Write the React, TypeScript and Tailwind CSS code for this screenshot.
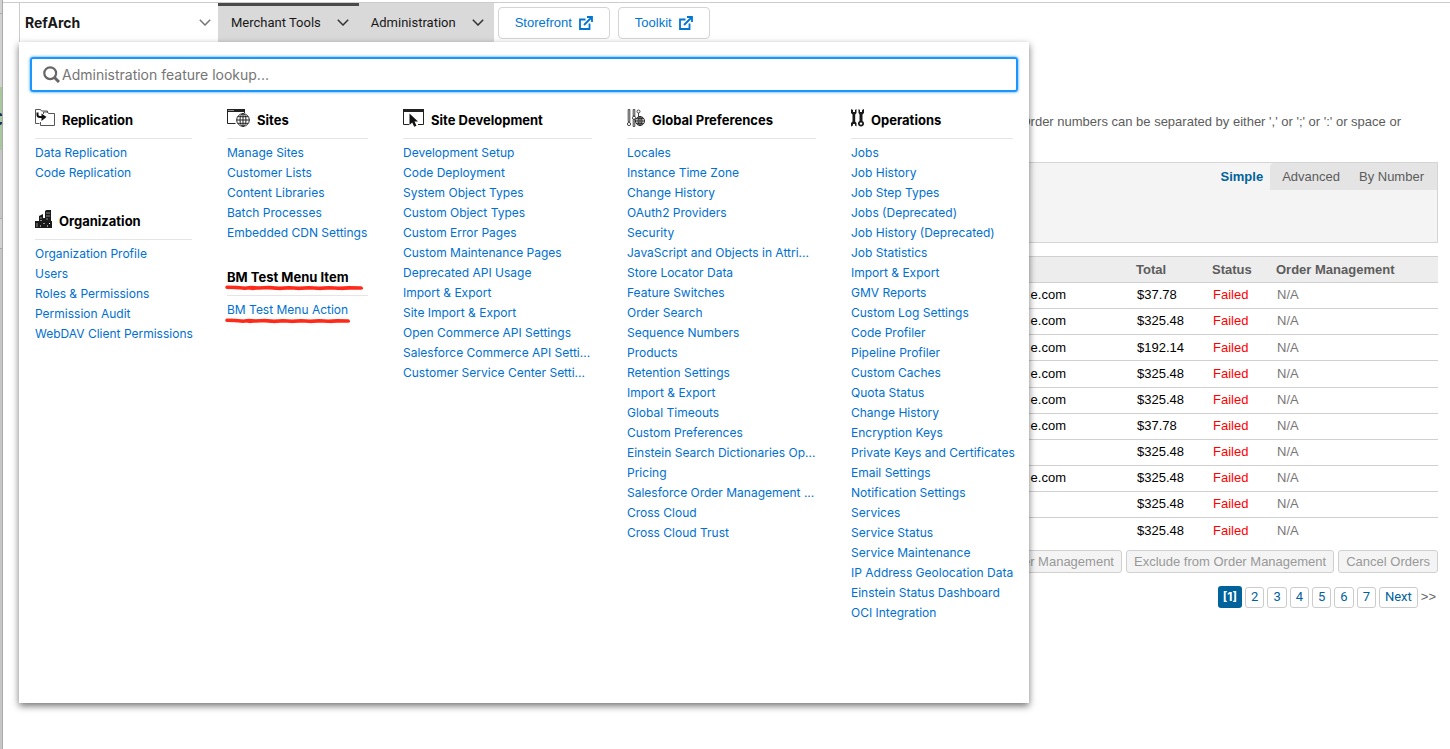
import React, { FC, ReactNode } from "react";

interface MenuSection {
  title: string;
  icon?: ReactNode;
  links: string[];
  marked?: boolean;
}

interface MenuColumn {
  width: string;
  sections: MenuSection[];
}

const ReplicationIcon = () => (
  <svg className="h-[18px] w-5" viewBox="0 0 20 18" fill="none" stroke="#555">
    <path d="M.5 14.500V.5h5l1 1.500h6v2" />
    <path d="M.5 14.500h4" />
    <path d="M5.500 13V16.500h14v-12h-6l-1-1.500h-4v2" />
    <path d="M2.500 3.500v2.500q0 2 2.500 2h2" stroke="#111" strokeWidth="2" />
    <path d="M6.500 4.500l5 3.500-5 4z" fill="#111" stroke="none" />
  </svg>
);

const OrganizationIcon = () => (
  <svg className="h-[18px] w-[17px]" viewBox="0 0 17 18">
    <path d="M0 18v-7h4V6l4-2v4h2V1l1.500-1H16v11h1v7z" fill="#1a1a1a" />
    <path
      d="M1.500 14h1M1.500 16h1M5.500 8h1M5.500 10.500h1M11.500 3h1M13.500 3h1M11.500 6h1M13.500 6h1M11.500 9h1M8.500 13.500h1M14 13.500h1M5 16h1M12 16h1"
      stroke="#fff"
    />
  </svg>
);

const SitesIcon = () => (
  <svg className="h-[18px] w-[23px]" viewBox="0 0 23 18" fill="none" stroke="#222">
    <path d="M.5 1v13.500h8M17.500 1v3" />
    <path d="M0 1.500h18" strokeWidth="3" />
    <path d="M1.500 1.500h1M3.500 1.500h1M5.500 1.500h1" stroke="#fff" />
    <circle cx="16" cy="11" r="6.300" fill="#fff" />
    <ellipse cx="16" cy="11" rx="3" ry="6.300" />
    <path d="M16 4.500v13M9.500 11h13M10.800 7.700h10.400M10.800 14.300h10.400" />
  </svg>
);

const SiteDevelopmentIcon = () => (
  <svg className="h-[18px] w-[21px]" viewBox="0 0 21 18" fill="none" stroke="#222">
    <path d="M6 15.500H.5V1M15 15.500h5.500V1" />
    <path d="M0 1.500h21" strokeWidth="3" />
    <path d="M6.500 4.500v11.500l2.700-2.500 2 4.300 2.300-1-2-4.300h3.500z" fill="#111" stroke="none" />
  </svg>
);

const GlobalPreferencesIcon = () => (
  <svg className="h-[18px] w-[18px]" viewBox="0 0 18 18" fill="none" stroke="#444">
    <path d="M1.200 .5h1.600v12H1.200zM6.200 .5h1.600v6.500H6.200zM11.500 4v4" />
    <circle cx="2" cy="15" r="1.600" />
    <circle cx="7" cy="8.800" r="1.600" />
    <path d="M6.200 10.500h1.600v7H6.200z" />
    <circle cx="11.500" cy="2.500" r="1.500" />
    <circle cx="13" cy="12" r="4.500" fill="#fff" stroke="#222" />
    <ellipse cx="13" cy="12" rx="2" ry="4.500" stroke="#222" />
    <path d="M13 7.500v9M8.500 12h9M9.500 9.700h7M9.500 14.300h7" stroke="#222" />
  </svg>
);

const OperationsIcon = () => (
  <svg className="h-[18px] w-[13px]" viewBox="0 0 13 18" fill="#1a1a1a">
    <path d="M0 0l2 1v2h2V1l1.500-1v4L4.200 5.500v7L5.500 14v3.500L4 16.500V15H2v1.500L0 17.500V14l1.500-1.500v-7L0 4z" />
    <path d="M7.500 0L9 1v2h2V1l2-1v4l-1.500 1.500v6.500a3 3 0 1 1-3 0V5.500L7.500 4z" />
    <circle cx="10" cy="14.600" r="1.200" fill="#fff" />
  </svg>
);

const SearchIcon = () => (
  <svg className="h-[17px] w-[17px]" viewBox="0 0 17 17" fill="none" stroke="#666" strokeWidth="2.200">
    <circle cx="7.200" cy="7.200" r="5.900" />
    <path d="M11.500 11.500l4.500 4.500" strokeWidth="3" />
  </svg>
);

const Chevron: FC<{ color?: string }> = ({ color = "#333" }) => (
  <svg className="h-[7px] w-3" viewBox="0 0 12 7" fill="none" stroke={color} strokeWidth="1.500">
    <path d="M.8 .8L6 6 11.200 .8" />
  </svg>
);

const ExternalIcon = () => (
  <svg className="h-[14px] w-[14px]" viewBox="0 0 14 14" fill="none" stroke="#0176d3" strokeWidth="1.800">
    <path d="M6.500 3.500H1V13h9.500V7.500" />
    <path d="M5 9l7.500-7.500M8 1h5v5" />
  </svg>
);

const Scribble: FC<{ className: string }> = ({ className }) => (
  <svg
    className={`absolute top-full -left-0.5 h-[6px] ${className}`}
    viewBox="0 0 138 6"
    preserveAspectRatio="none"
    fill="none"
    stroke="#ff2a1a"
    strokeLinecap="round"
  >
    <path
      d="M2 2.200L12 2.500 20 3.200 26 2.500 34 3 44 2.500 54 3.200 64 2.700 74 3.200 84 2.700 94 3.200 104 2.700 114 3.200 124 2.700 136 3"
      strokeWidth="3.500"
    />
    <path d="M3 2l9 1.500 7-1 9 2 8-2 10 1 9 1 11-2 8 2 12-2 9 2 12-2 10 2 12-2 9 1" strokeWidth="1.500" />
  </svg>
);

const columns: MenuColumn[] = [
  {
    width: "w-[157px]",
    sections: [
      {
        title: "Replication",
        icon: <ReplicationIcon />,
        links: ["Data Replication", "Code Replication"],
      },
      {
        title: "Organization",
        icon: <OrganizationIcon />,
        links: [
          "Organization Profile",
          "Users",
          "Roles & Permissions",
          "Permission Audit",
          "WebDAV Client Permissions",
        ],
      },
    ],
  },
  {
    width: "w-[141px]",
    sections: [
      {
        title: "Sites",
        icon: <SitesIcon />,
        links: [
          "Manage Sites",
          "Customer Lists",
          "Content Libraries",
          "Batch Processes",
          "Embedded CDN Settings",
        ],
      },
      {
        title: "BM Test Menu Item",
        links: ["BM Test Menu Action"],
        marked: true,
      },
    ],
  },
  {
    width: "w-[189px]",
    sections: [
      {
        title: "Site Development",
        icon: <SiteDevelopmentIcon />,
        links: [
          "Development Setup",
          "Code Deployment",
          "System Object Types",
          "Custom Object Types",
          "Custom Error Pages",
          "Custom Maintenance Pages",
          "Deprecated API Usage",
          "Import & Export",
          "Site Import & Export",
          "Open Commerce API Settings",
          "Salesforce Commerce API Setti...",
          "Customer Service Center Setti...",
        ],
      },
    ],
  },
  {
    width: "w-[189px]",
    sections: [
      {
        title: "Global Preferences",
        icon: <GlobalPreferencesIcon />,
        links: [
          "Locales",
          "Instance Time Zone",
          "Change History",
          "OAuth2 Providers",
          "Security",
          "JavaScript and Objects in Attri...",
          "Store Locator Data",
          "Feature Switches",
          "Order Search",
          "Sequence Numbers",
          "Products",
          "Retention Settings",
          "Import & Export",
          "Global Timeouts",
          "Custom Preferences",
          "Einstein Search Dictionaries Op...",
          "Pricing",
          "Salesforce Order Management ...",
          "Cross Cloud",
          "Cross Cloud Trust",
        ],
      },
    ],
  },
  {
    width: "w-[162px]",
    sections: [
      {
        title: "Operations",
        icon: <OperationsIcon />,
        links: [
          "Jobs",
          "Job History",
          "Job Step Types",
          "Jobs (Deprecated)",
          "Job History (Deprecated)",
          "Job Statistics",
          "Import & Export",
          "GMV Reports",
          "Custom Log Settings",
          "Code Profiler",
          "Pipeline Profiler",
          "Custom Caches",
          "Quota Status",
          "Change History",
          "Encryption Keys",
          "Private Keys and Certificates",
          "Email Settings",
          "Notification Settings",
          "Services",
          "Service Status",
          "Service Maintenance",
          "IP Address Geolocation Data",
          "Einstein Status Dashboard",
          "OCI Integration",
        ],
      },
    ],
  },
];

const orders = [
  { email: "e.com", total: "$37.78" },
  { email: "e.com", total: "$325.48" },
  { email: "e.com", total: "$192.14" },
  { email: "e.com", total: "$325.48" },
  { email: "e.com", total: "$325.48" },
  { email: "e.com", total: "$37.78" },
  { email: "", total: "$325.48" },
  { email: "e.com", total: "$325.48" },
  { email: "", total: "$325.48" },
  { email: "", total: "$325.48" },
];

const Header = () => (
  <header className="flex h-10 border-t border-[#ccc] pl-4 text-[13px] text-[#181818]">
    <div className="relative flex w-[199px] items-center border-l border-[#ccc]">
      <select
        aria-label="Site"
        className="h-full w-full appearance-none bg-transparent pl-[5px] text-sm font-bold"
      >
        <option>RefArch</option>
      </select>
      <span className="pointer-events-none absolute right-[7px]">
        <Chevron color="#777" />
      </span>
    </div>
    <nav className="flex bg-[#d9d9d9] font-['Roboto',sans-serif]">
      <button className="flex items-center gap-4 border-t-[3px] border-[#4a4a4a] pr-[10px] pb-[3px] pl-[13px]">
        Merchant Tools
        <Chevron />
      </button>
      <button className="flex items-center gap-4 pr-[10px] pl-3">
        Administration
        <Chevron />
      </button>
    </nav>
    <div className="flex items-center gap-2 pl-1 font-['Liberation_Sans',Arial,sans-serif] text-[#0176d3]">
      <a href="#" className="flex h-8 items-center gap-[7px] rounded border border-[#d4d4d4] px-4">
        Storefront
        <ExternalIcon />
      </a>
      <a href="#" className="flex h-8 items-center gap-[7px] rounded border border-[#d4d4d4] px-4">
        Toolkit
        <ExternalIcon />
      </a>
    </div>
  </header>
);

const Section: FC<{ section: MenuSection }> = ({ section }) => (
  <section>
    <h2 className="flex items-end gap-[7px] border-b border-[#e5e5e5] pb-[10px] text-[13px] leading-[15px] font-bold text-black">
      {section.icon && <span className="h-[19px]">{section.icon}</span>}
      <span className="relative whitespace-nowrap">
        {section.title}
        {section.marked && <Scribble className="w-[138px]" />}
      </span>
    </h2>
    <ul className="pt-1">
      {section.links.map((link) => (
        <li key={link} className="h-5 text-xs leading-5 whitespace-nowrap">
          <a href="#" className="relative inline-block h-[18px] text-[#0070d2]">
            {link}
            {section.marked && <Scribble className="w-[125px]" />}
          </a>
        </li>
      ))}
    </ul>
  </section>
);

const AdministrationMenu = () => (
  <div className="absolute top-0 left-4 bg-white pb-20 shadow-[0_3px_7px_rgba(0,0,0,0.55)]">
    <div className="px-[11px] pt-[15px]">
      <label className="flex h-[35px] items-center gap-0.5 rounded-[3px] border-2 border-[#1b96ff] pl-[11px] shadow-[0_0_3px_#1b96ff]">
        <SearchIcon />
        <input
          type="text"
          aria-label="Administration feature lookup"
          placeholder="Administration feature lookup..."
          className="flex-grow text-sm outline-none placeholder:text-[#757575]"
        />
      </label>
    </div>
    <div className="flex gap-[35px] px-4 pt-[17px]">
      {columns.map((column, i) => (
        <div key={i} className={`flex flex-col gap-[27px] ${column.width}`}>
          {column.sections.map((section) => (
            <Section key={section.title} section={section} />
          ))}
        </div>
      ))}
    </div>
  </div>
);

const OrdersPage = () => (
  <main className="pt-[70px] pr-3 pl-5 font-['Liberation_Sans',Arial,sans-serif] text-[13px] text-[#5c5c5c]">
    <p className="pr-[37px] text-right leading-5">
      Order numbers can be separated by either ',' or ';' or ':' or space or
    </p>
    <div className="mt-[30px] flex h-[81px] items-start justify-end border border-[#d5d5d5] bg-[#f4f4f4] leading-[27px]">
      <button className="px-[7px] font-bold text-[#00629b]">Simple</button>
      <div className="flex rounded-tl bg-[#e4e4e4] pr-[5px]">
        <button className="pr-[11px] pl-3">Advanced</button>
        <button className="px-2">By Number</button>
      </div>
    </div>
    <table className="mt-[13px] h-[288px] w-full border-t border-[#d0d0d0]">
      <thead>
        <tr className="h-[26px] border-b border-[#d0d0d0] bg-[#ededed] text-left font-bold">
          <th aria-label="Email" />
          <th className="w-[76px]">Total</th>
          <th className="w-16">Status</th>
          <th className="w-[162px]">Order Management</th>
        </tr>
      </thead>
      <tbody>
        {orders.map((order, i) => (
          <tr key={i} className="h-[26px] border-b border-[#d0d0d0] last:border-0">
            <td className="pr-[70px] pb-px text-right text-black">{order.email}</td>
            <td className="pb-px pl-px text-black">{order.total}</td>
            <td className="pb-px pl-px text-[#f00]">Failed</td>
            <td className="pb-px pl-px text-[#777]">N/A</td>
          </tr>
        ))}
      </tbody>
    </table>
    <div className="mt-[6px] flex justify-end gap-1 text-[#999]">
      {["Order Management", "Exclude from Order Management", "Cancel Orders"].map((label) => (
        <button
          key={label}
          disabled
          className="h-[23px] rounded-[3px] border border-[#d0d0d0] bg-[#f4f4f4] px-[7px]"
        >
          {label}
        </button>
      ))}
    </div>
    <nav className="mt-[13px] flex items-center justify-end gap-[3px] pr-0.5 font-['Roboto',sans-serif] text-[#00629b]">
      <span className="flex h-[22px] items-center rounded-[3px] bg-[#00629b] px-[5px] font-['Inter',sans-serif] text-xs font-bold text-white">
        [1]
      </span>
      {["2", "3", "4", "5", "6", "7", "Next"].map((page) => (
        <a
          key={page}
          href="#"
          className="flex h-[21px] items-center rounded-[3px] border border-[#ccc] px-[5px]"
        >
          {page}
        </a>
      ))}
      <span className="font-['Liberation_Sans',Arial,sans-serif] text-[#666]">&gt;&gt;</span>
    </nav>
  </main>
);

// edge of the dimmed page that lies behind the window
const PageEdge = () => (
  <div aria-hidden="true" className="flex w-[3px] flex-col border-r border-[#aaa] bg-[#c6c6c6]">
    <div className="h-3.5 border-b border-[#aaa] bg-[#d2d2d2]" />
    <div className="h-[73px] bg-[#d2d2d2]" />
    <div className="flex h-[63px] items-center bg-[#a9c79f]">
      <div className="h-3 w-0.5 rounded-r border-y-[3px] border-[#16325c]" />
    </div>
    <div className="h-[69px] border-b border-[#aaa]" />
    <div className="h-[30px] border-b border-[#aaa] bg-[#d2d2d2]" />
  </div>
);

const App: FC = () => {
  return (
    <div className="flex min-h-screen overflow-hidden bg-white font-['Inter',sans-serif]">
      <PageEdge />
      <div className="min-w-0 flex-grow pt-0.5">
        <Header />
        <div className="relative">
          <OrdersPage />
          <AdministrationMenu />
        </div>
      </div>
    </div>
  );
};

export default App;
